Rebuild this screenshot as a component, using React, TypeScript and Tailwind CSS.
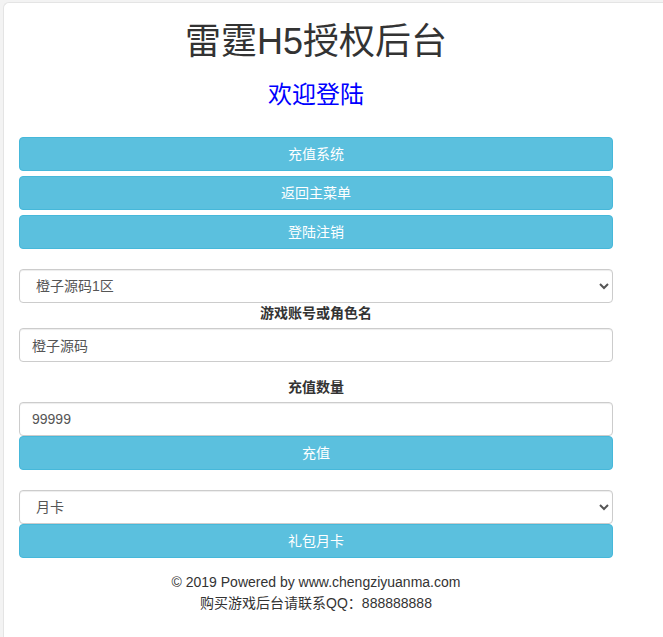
import { useState } from 'react';

const font = { fontFamily: '"Liberation Sans", "Noto Sans CJK SC", sans-serif' };

function InfoButton({ children }: { children: React.ReactNode }) {
  return (
    <button
      type="button"
      className="block h-[34px] w-full rounded-[4px] border border-[#46b8da] bg-[#5bc0de] text-[14px] leading-[20px] text-white"
    >
      {children}
    </button>
  );
}

const inputCls =
  'block h-[34px] w-full rounded-[4px] border border-[#ccc] bg-white px-[12px] text-[14px] text-[#555] shadow-[inset_0_1px_1px_rgba(0,0,0,0.075)] outline-none';

export default function App() {
  const [account, setAccount] = useState('橙子源码');
  const [amount, setAmount] = useState('99999');

  return (
    <div className="min-h-screen overflow-hidden bg-[#f3f3f3] pl-[3px] pt-[2px]" style={font}>
      <div className="min-h-[640px] w-[720px] rounded-tl-[6px] border-l border-t border-[#e4e4e4] bg-white pl-[15px]">
        <div className="w-[594px] text-[#333]">
          <h1 className="mt-[19px] text-center text-[36px] leading-[1.1]">雷霆H5授权后台</h1>
          <h3 className="mt-[20px] text-center text-[24px] leading-[1.1] text-[#0000ff]">欢迎登陆</h3>

          {/* 菜单 */}
          <div className="mt-[29px] flex flex-col gap-[5px]">
            <InfoButton>充值系统</InfoButton>
            <InfoButton>返回主菜单</InfoButton>
            <InfoButton>登陆注销</InfoButton>
          </div>

          {/* 充值 */}
          <select className={`mt-[20px] ${inputCls}`} defaultValue="1">
            <option value="1">橙子源码1区</option>
          </select>
          <label className="block text-center text-[14px] font-bold leading-[20px]">游戏账号或角色名</label>
          <input
            className={`mt-[5px] ${inputCls}`}
            value={account}
            onChange={(e) => setAccount(e.target.value)}
          />
          <label className="mt-[15px] block text-center text-[14px] font-bold leading-[20px]">充值数量</label>
          <input
            className={`mt-[5px] ${inputCls}`}
            value={amount}
            onChange={(e) => setAmount(e.target.value)}
          />
          <InfoButton>充值</InfoButton>

          {/* 礼包 */}
          <select className={`mt-[20px] ${inputCls}`} defaultValue="month">
            <option value="month">月卡</option>
          </select>
          <InfoButton>礼包月卡</InfoButton>

          <div className="mt-[14px] text-center text-[14px] leading-[21px] text-[#333]">
            <p>© 2019 Powered by www.chengziyuanma.com</p>
            <p>购买游戏后台请联系QQ：888888888</p>
          </div>
        </div>
      </div>
    </div>
  );
}
